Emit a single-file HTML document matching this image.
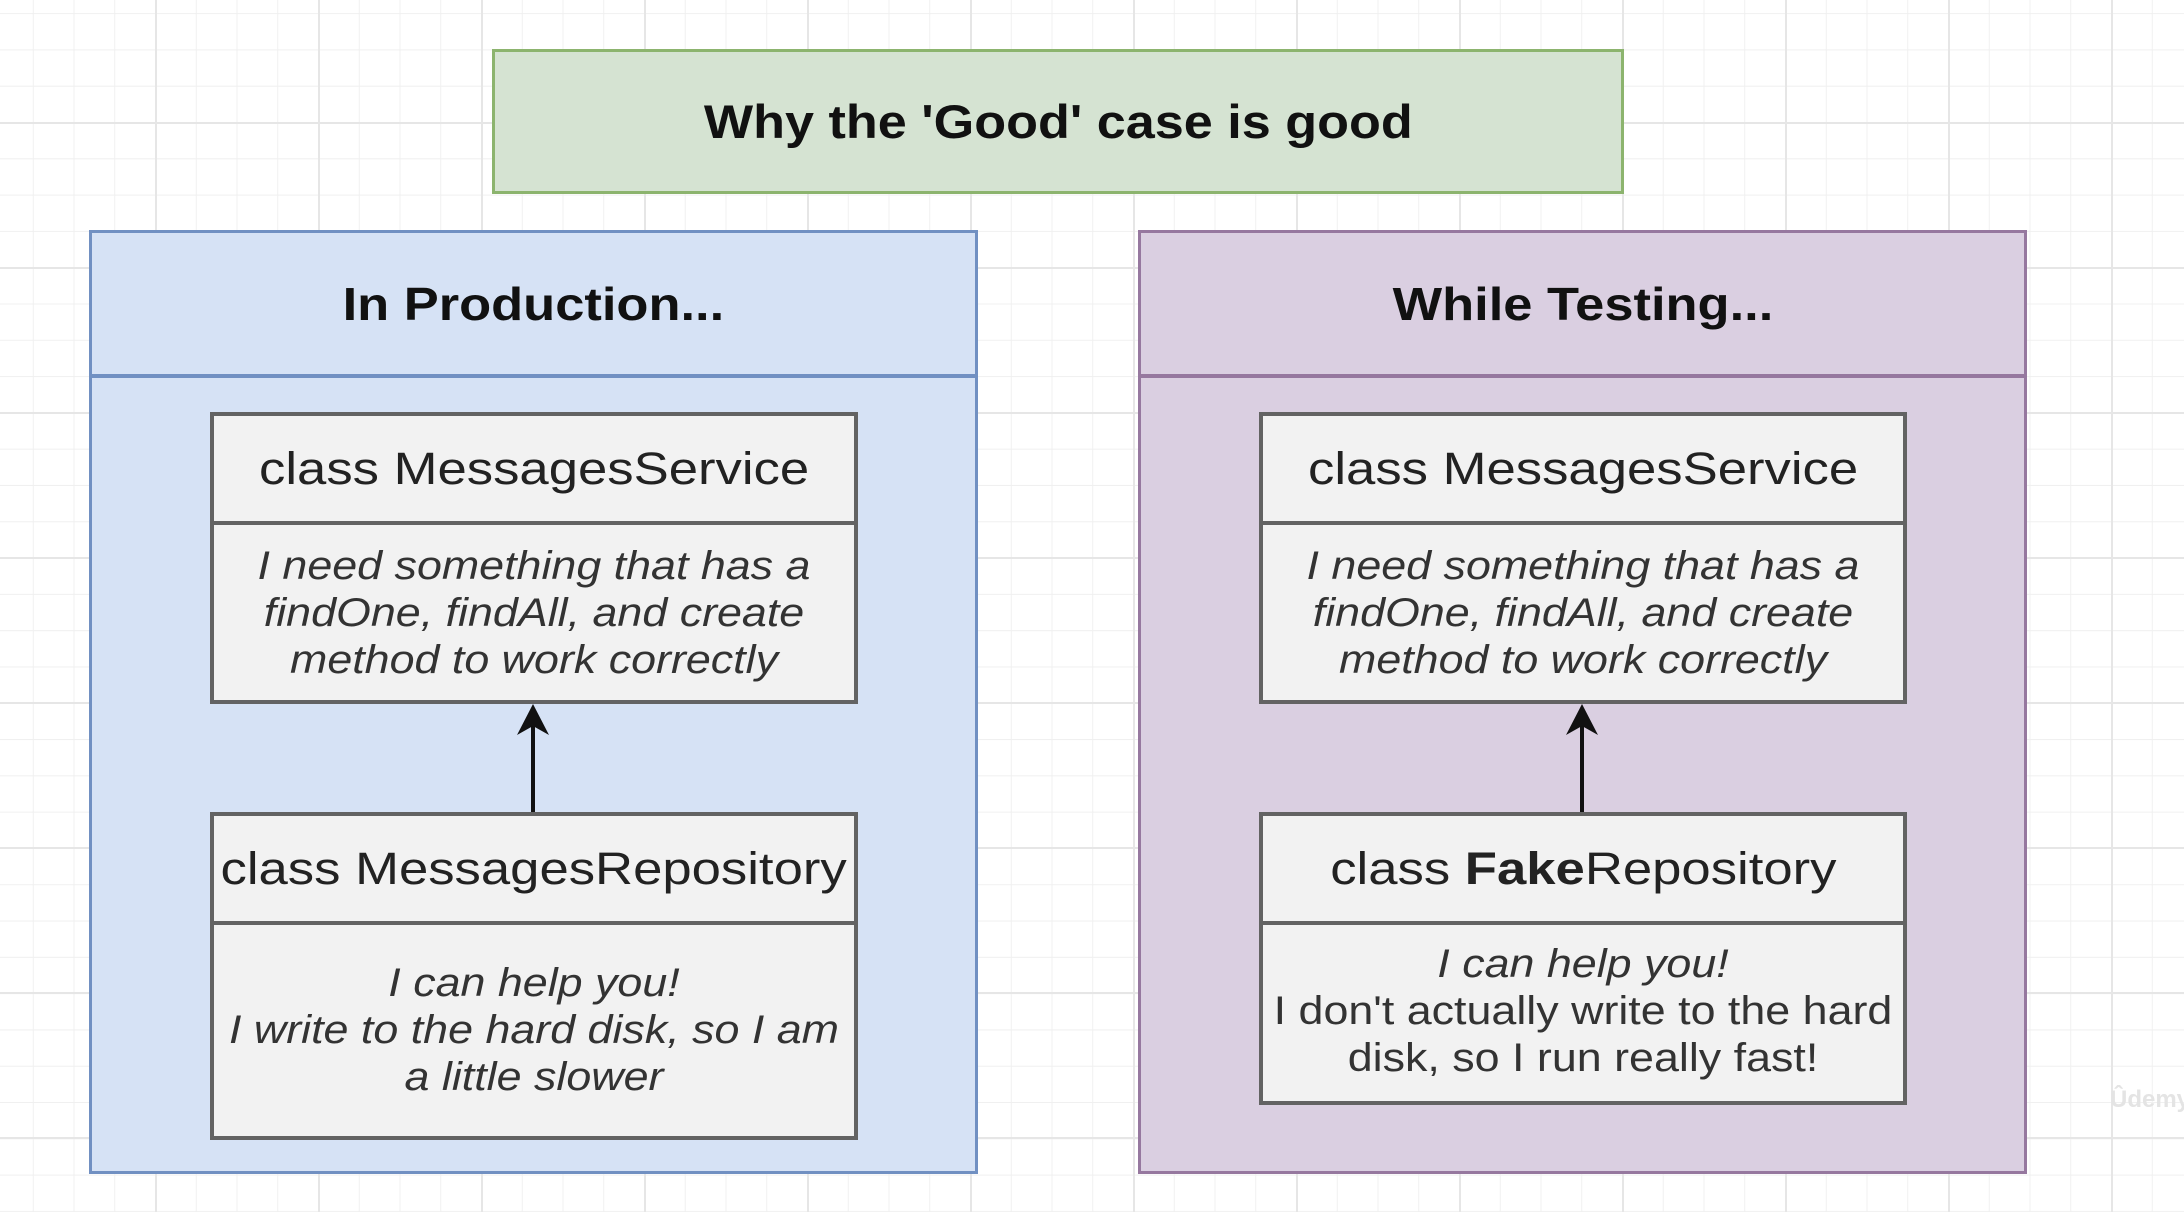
<!DOCTYPE html>
<html><head><meta charset="utf-8">
<style>
html,body{margin:0;padding:0}
body{width:2184px;height:1212px;position:relative;overflow:hidden;background-color:#fff;
background-image:
linear-gradient(to right,#e6e6e6 2px,transparent 2px),
linear-gradient(to bottom,#e6e6e6 2px,transparent 2px),
linear-gradient(to right,#f0f0f0 1px,transparent 1px),
linear-gradient(to bottom,#f0f0f0 1px,transparent 1px);
background-size:163px 145px,163px 145px,40.75px 36.3px,40.75px 36.3px;
background-position:155px 122px,155px 122px,155px 122px,155px 122px;
font-family:"Liberation Sans",Arial,sans-serif;color:#111}
.abs{position:absolute;box-sizing:border-box}
.title{left:492px;top:49px;width:1132px;height:145px;background:#d5e3d2;border:3px solid #8cb46e;
display:flex;align-items:center;justify-content:center;font-weight:bold;font-size:47px}
.title span{display:inline-block;transform:scaleX(1.11)}
.panel{top:230px;width:889px;height:944px;border:3px solid}
.blue{left:89px;background:#d6e2f5;border-color:#7190c2}
.purple{left:1138px;background:#dacfe1;border-color:#96789f}
.ph{position:absolute;left:0;right:0;top:0;height:145px;border-bottom:4px solid;display:flex;align-items:center;justify-content:center;font-weight:bold;font-size:46px;box-sizing:border-box}
.ph span{display:inline-block;transform:scaleX(1.14)}
.blue .ph{border-color:#7190c2}
.purple .ph{border-color:#96789f}
.box{background:#f2f2f2;border:4px solid #636363}
.cls{position:absolute;left:0;right:0;top:0;height:109px;border-bottom:4px solid #636363;display:flex;align-items:center;justify-content:center;font-size:45px;box-sizing:border-box;white-space:nowrap;color:#222}
.cls span{display:inline-block;transform:scaleX(1.17)}
.body{position:absolute;left:0;right:0;text-align:center;font-size:40px;line-height:47px;color:#333;transform:scaleX(1.12)}
i{font-style:italic}
</style></head><body>
<div class="abs title"><span>Why the 'Good' case is good</span></div>

<div class="abs panel blue"><div class="ph"><span>In Production...</span></div></div>
<div class="abs panel purple"><div class="ph"><span>While Testing...</span></div></div>

<div class="abs box" style="left:210px;top:412px;width:648px;height:292px">
 <div class="cls"><span>class MessagesService</span></div>
 <div class="body" style="top:127px"><i>I need something that has a<br>findOne, findAll, and create<br>method to work correctly</i></div>
</div>
<div class="abs box" style="left:210px;top:812px;width:648px;height:328px">
 <div class="cls"><span>class MessagesRepository</span></div>
 <div class="body" style="top:144px"><i>I can help you!<br>I write to the hard disk, so I am<br>a little slower</i></div>
</div>
<div class="abs box" style="left:1259px;top:412px;width:648px;height:292px">
 <div class="cls"><span>class MessagesService</span></div>
 <div class="body" style="top:127px"><i>I need something that has a<br>findOne, findAll, and create<br>method to work correctly</i></div>
</div>
<div class="abs box" style="left:1259px;top:812px;width:648px;height:293px">
 <div class="cls"><span>class&nbsp;<b>Fake</b>Repository</span></div>
 <div class="body" style="top:125px"><i>I can help you!</i><br>I don't actually write to the hard<br>disk, so I run really fast!</div>
</div>

<svg class="abs" style="left:0;top:0" width="2184" height="1212">
 <line x1="533" y1="812" x2="533" y2="722" stroke="#111" stroke-width="4"/>
 <path d="M533 704 L517 735 L533 726 L549 735 Z" fill="#111"/>
 <line x1="1582" y1="812" x2="1582" y2="722" stroke="#111" stroke-width="4"/>
 <path d="M1582 704 L1566 735 L1582 726 L1598 735 Z" fill="#111"/>
</svg>

<div class="abs" style="left:2110px;top:1086px;font-size:24px;font-weight:bold;color:#e4e4e4">Ûdemy</div>
</body></html>
